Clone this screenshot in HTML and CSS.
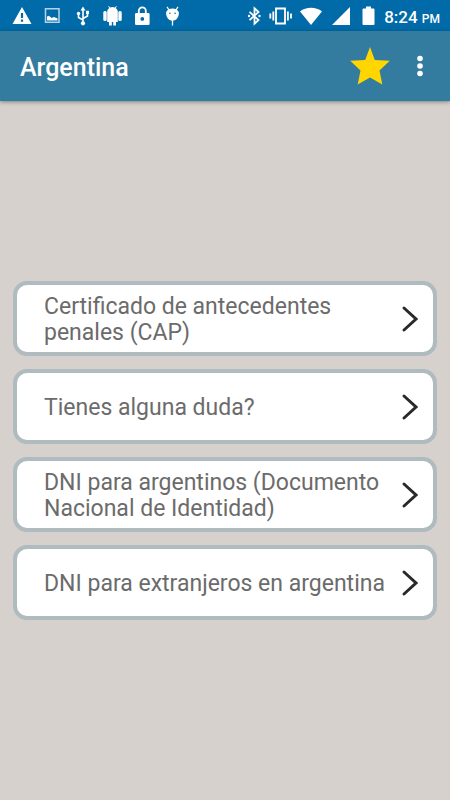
FILE: index.html
```
<!DOCTYPE html>
<html lang="es">
<head>
  <meta charset="UTF-8">
  <meta name="viewport" content="width=device-width, initial-scale=1.0">
  <title>Argentina</title>
  <link rel="stylesheet" href="styles.css">
</head>
<body>
<div class="status-bar">
  <div class="status-icons left">
    <svg width="20" height="20" viewBox="0 0 20 20"><path fill="#fff" fill-rule="evenodd" d="M10 1L19.500 18H.5zM8.900 7v5h2.200V7zM8.900 13.500v2.200h2.200v-2.200z"/></svg>
    <svg width="20" height="20" viewBox="0 0 20 20"><path fill="none" stroke="#b5d3e5" stroke-width="1.500" d="M3.500 2.700h13.500v13.500H3.500z"/><path fill="#fff" d="M5 14.500v-4l2-.8 2.500 2.300 2.500-1 3.500 1.500v2z"/></svg>
    <svg width="20" height="20" viewBox="0 0 20 20"><path fill="none" stroke="#fff" stroke-width="1.600" d="M11 3v14M11 14l-4.500-2.500V7.500M11 12.500l4.500-2.500V6.500"/><path fill="#fff" d="M11 .5l2.500 4h-5zM14 4.700h3v3.200h-3z"/><circle cx="6.500" cy="7.500" r="1.700" fill="#fff"/><circle cx="11" cy="17.300" r="2.100" fill="#fff"/></svg>
    <svg width="20" height="20" viewBox="0 0 20 20"><path fill="#fff" d="M5.200 5.500c.3-1.700 1-2.700 2.100-3.500L6.200.5l.7-.4 1.200 1.400a6 6 0 0 1 4.800 0L14.100.1l.7.400L13.700 2c1.100.8 1.800 1.800 2.100 3.500V16H14v3.500h-2.800V16H9.800v3.500H7V16H5.200z"/><rect x="1.300" y="5" width="3.400" height="10" rx="1.500" fill="#fff"/><rect x="16.300" y="5" width="3.400" height="10" rx="1.500" fill="#fff"/></svg>
    <svg width="20" height="20" viewBox="0 0 20 20"><path fill="none" stroke="#fff" stroke-width="1.800" d="M6.800 8V4.800a3.500 3.500 0 0 1 7 0V8"/><path fill="#fff" fill-rule="evenodd" d="M4.300 7h12a1.300 1.300 0 0 1 1.300 1.300v9.400a1.300 1.300 0 0 1-1.300 1.300h-12A1.300 1.300 0 0 1 3 17.700V8.300A1.300 1.300 0 0 1 4.300 7zm6 4a1.900 1.900 0 1 0 0 3.800 1.900 1.900 0 0 0 0-3.800z"/></svg>
    <svg width="20" height="20" viewBox="0 0 20 20"><path stroke="#fff" stroke-width="1.200" d="M5 .8l2 3M16 .8l-2 3"/><path stroke="#fff" stroke-width="1.300" d="M10.500 13v6.500"/><path fill="#fff" fill-rule="evenodd" d="M4.200 6c1.200-2.500 3.300-3.500 6.300-3.500S15.600 3.500 16.800 6c.6 4.500-2.300 8.800-6.300 8.800S3.600 10.500 4.200 6zM7.900 6.500a.8.800 0 1 0 0 1.600.8.800 0 0 0 0-1.600zm5.200 0a.8.800 0 1 0 0 1.600.8.800 0 0 0 0-1.600z"/></svg>
  </div>
  <div class="status-icons right">
    <svg width="16" height="20" viewBox="0 0 16 20"><path fill="none" stroke="#fff" stroke-width="1.800" d="M3.500 5.800l9 8.200L8.500 17.700V2.300L12.500 6l-9 8.200"/><circle cx="3" cy="10" r="1.200" fill="#fff"/><circle cx="13.500" cy="10" r="1.200" fill="#fff"/></svg>
    <svg width="24" height="20" viewBox="0 0 24 20"><path fill="none" stroke="#fff" stroke-width="1.800" d="M7 2.500h9v15H7zM4.300 5.500v9M1.300 7.500v5M18.900 5.500v9M22 7.500v5"/></svg>
    <svg width="22" height="20" viewBox="0 0 22 20"><path fill="#fff" d="M0 5.500C6 .5 16 .5 22 5.500L11 19z"/></svg>
    <svg class="signal" width="18" height="20" viewBox="0 0 18 20"><path fill="#fff" d="M18 1v18H0z"/></svg>
    <svg width="13" height="20" viewBox="0 0 13 20"><path fill="#fff" d="M4 .5h5v2h2.500q1 0 1 1v14.500q0 1-1 1h-10q-1 0-1-1V3.500q0-1 1-1H4z"/></svg>
  </div>
  <div class="clock">8:24 <span class="clock-pm">PM</span></div>
</div>
<header>
  <h1>Argentina</h1>
  <button class="icon-button" aria-label="Favorito">
    <svg width="40" height="40" viewBox="0 0 40 40"><path fill="#ffd600" d="M20 1l4.800 13 15 .8-10.300 9.700 2.800 14L20 31.500 7.700 38.500l2.800-14L.2 14.800l15-.8z"/></svg>
  </button>
  <button class="icon-button menu-button" aria-label="Más opciones">
    <svg width="8" height="22" viewBox="0 0 8 22"><circle cx="4" cy="3.500" r="2.800" fill="#fff"/><circle cx="4" cy="11" r="2.800" fill="#fff"/><circle cx="4" cy="18.500" r="2.800" fill="#fff"/></svg>
  </button>
</header>
<main class="options">
  <button class="option">
    <span class="option-text">Certificado de antecedentes penales (CAP)</span>
    <svg class="arrow" width="18" height="28" viewBox="0 0 18 28"><path d="M3 3l12 11L3 25"/></svg>
  </button>
  <button class="option">
    <span class="option-text">Tienes alguna duda?</span>
    <svg class="arrow" width="18" height="28" viewBox="0 0 18 28"><path d="M3 3l12 11L3 25"/></svg>
  </button>
  <button class="option">
    <span class="option-text">DNI para argentinos (Documento Nacional de Identidad)</span>
    <svg class="arrow" width="18" height="28" viewBox="0 0 18 28"><path d="M3 3l12 11L3 25"/></svg>
  </button>
  <button class="option">
    <span class="option-text">DNI para extranjeros en argentina</span>
    <svg class="arrow" width="18" height="28" viewBox="0 0 18 28"><path d="M3 3l12 11L3 25"/></svg>
  </button>
</main>
</body>
</html>
```
FILE: styles.css
```
* {
  box-sizing: border-box;
}
body {
  font-family: Roboto, sans-serif;
  margin: 0;
  min-height: 100vh;
  display: flex;
  flex-direction: column;
  background: #d6d1cd;
}
svg {
  display: block;
  flex-shrink: 0;
}
button {
  font-family: inherit;
  cursor: pointer;
}
.status-bar {
  display: flex;
  align-items: center;
  height: 31px;
  padding: 0 10px 0 12px;
  background: #006ba8;
  color: white;
}
.status-icons {
  display: flex;
  align-items: center;
}
.left {
  gap: 10px;
}
.right {
  gap: 7px;
  margin-left: auto;
}
.signal {
  margin: 0 5px 0 3px;
}
.clock {
  margin-left: 9px;
  padding-top: 2px;
  font-size: 17px;
  font-weight: 500;
  white-space: nowrap;
}
.clock-pm {
  font-size: 12px;
}
header {
  display: flex;
  align-items: center;
  height: 70px;
  padding: 0 26px 0 20px;
  background: #337ca0;
  color: white;
  box-shadow: 0 1px 4px rgba(0, 0, 0, 0.4);
}
h1 {
  flex: 1;
  margin: 0;
  padding-top: 3px;
  font-size: 25px;
  font-weight: 500;
}
.icon-button {
  padding: 0;
  border: none;
  background: none;
}
.menu-button {
  margin-left: 26px;
}
.options {
  flex: 1;
  display: flex;
  flex-direction: column;
  justify-content: center;
  gap: 13px;
  padding: 0 13px;
}
.option {
  display: flex;
  align-items: center;
  gap: 8px;
  width: 100%;
  min-height: 75px;
  padding: 0 14px 0 27px;
  background: white;
  border: 4px solid #b0bbbf;
  border-radius: 14px;
  color: #6b6b6b;
  font-size: 23px;
  line-height: 26px;
  text-align: left;
}
.option-text {
  flex: 1;
  padding-top: 3px;
}
.arrow path {
  fill: none;
  stroke: #2b282c;
  stroke-width: 3;
  stroke-linecap: round;
}
```
